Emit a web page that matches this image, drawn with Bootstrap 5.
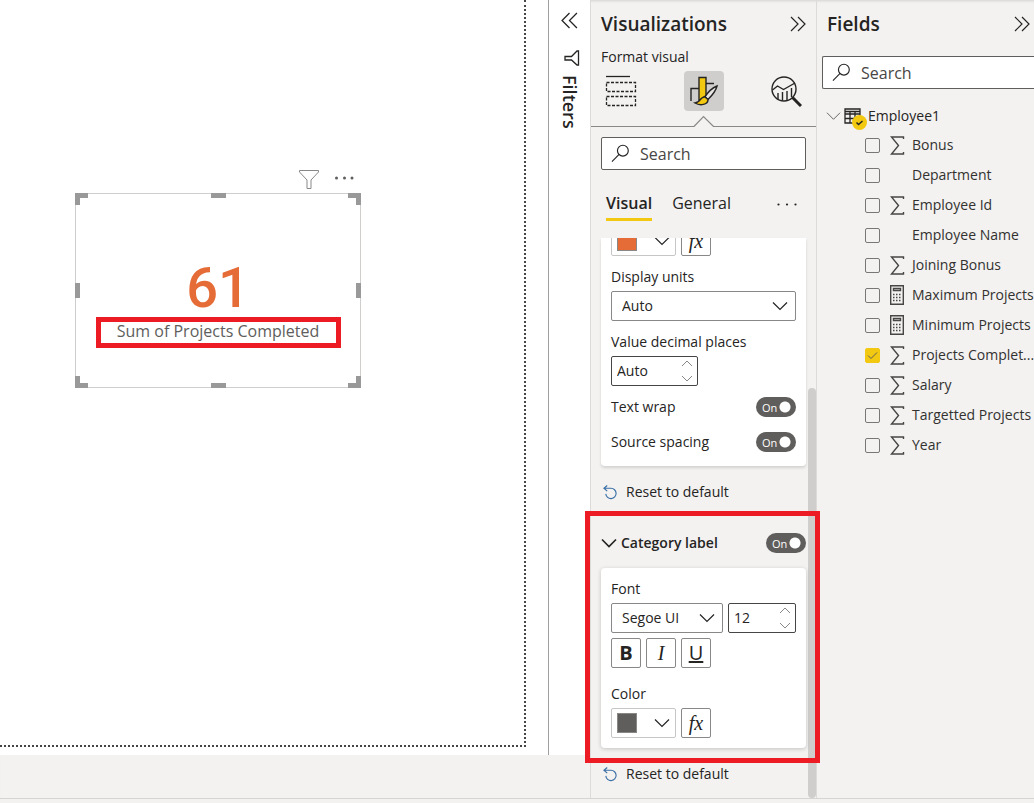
<!DOCTYPE html>
<html lang="en">
<head>
<meta charset="utf-8">
<meta name="viewport" content="width=device-width, initial-scale=1">
<title>Report editor</title>
<link rel="stylesheet" href="https://cdn.jsdelivr.net/npm/bootstrap@5.3.0/dist/css/bootstrap.min.css">
<style>
:root{--ink:#252423;--pane:#f3f2f1;--line:#8a8886;--yellow:#f2c811;--red:#ed1c24}
body{font-family:"Open Sans","Noto Sans",sans-serif;font-size:14px;line-height:20px;color:var(--ink);background:var(--pane)}
button{color:inherit}
svg{display:block;flex:none}
.line-icon{fill:none;stroke:var(--ink)}
.btn{font-size:14px;line-height:20px;color:var(--ink)}
.shell{min-height:100vh;overflow:hidden;display:grid;grid-template-rows:1fr 5px}
.workspace{display:grid;grid-template-columns:minmax(0,1fr) 226px 218px;box-shadow:inset 0 3px 3px -2px #0002}
.status-line{border-top:1px solid #d6d4d2}
.bottom-strip{height:43px}
.report{background:#fff}
.sheet{border-right:2px dotted #484644;border-bottom:2px dotted #484644;margin:0 22px 8px 0}
.filters{width:42px;border-left:1px solid #a19f9d}
.filters-name{writing-mode:vertical-rl;font-size:18px;font-weight:600;padding-top:9px}
.filter-cone{margin-top:21px}
/* card visual on the report canvas */
.card-visual{left:75px;top:193px;width:286px;height:195px;border:1px solid #d0cecd}
.visual-tools{right:5px;top:-24px}
.figure-value{font-family:Roboto,sans-serif;font-size:56px;line-height:56px;font-weight:500;color:#e66c37;padding-top:66px}
.figure-label{width:245px;height:31px;margin:1px auto 0;border:5px solid var(--red);font-size:16px;line-height:18px;color:#605e5c}
.grip{position:absolute;background:#999}
.grip-h{width:15px;height:5px;left:50%;margin-left:-7px}
.grip-v{width:5px;height:15px;top:50%;margin-top:-8px}
.grip-c{width:13px;height:12px;border:0 solid #999;background:none}
/* panes */
.viz,.fields{border-left:1px solid #dddbd9}
.pane-head{padding:12px 10px 0}
.pane-title{font-size:19px;line-height:24px;font-weight:600}
.viz-body{padding:10px 10px 0}
.subtitle{padding:11px 10px 4px}
.modes{padding:0 10px}
.mode{width:40px;height:40px}
.mode-on{background:#d0cecd}
.search{height:33px;border:1px solid #605e5c;border-radius:2px;background:#fff;padding-left:9px}
.search-fields{margin:20px 0 0 5px}
.search input{border:0;outline:0;background:none;font-size:16px;width:100%;min-width:0}
.search input::placeholder{color:#484644;opacity:1}
.tabs{margin-top:21px;padding:0 9px 0 5px}
.btn.tab-btn{font-size:16px;line-height:24px;padding:0 0 3px;border:0;border-bottom:3px solid transparent;border-radius:0}
.btn.tab-on{font-weight:600;border-color:var(--yellow)}
.stack{margin-top:17px}
.settings{background:#fff;border-radius:4px;box-shadow:0 1px 4px #0003;padding:0 10px}
.settings-cut{border-radius:0 0 4px 4px;box-shadow:0 2px 3px #0002}
.cut-row{height:18px;overflow:hidden}
.row-a,.row-b,.cut-row{gap:5px}
.box,.form-select.box{height:30px;border:1px solid var(--line);border-radius:2px;background-color:#fff;font-size:14px;line-height:20px;color:var(--ink)}
.form-select.box{padding:4px 30px 4px 10px;background-position:right 7px center;background-size:16px 10px;background-image:url("data:image/svg+xml,%3Csvg xmlns='http://www.w3.org/2000/svg' viewBox='0 0 16 10'%3E%3Cpath d='M1 1.5l7 7 7-7' fill='none' stroke='%23252423' stroke-width='1.2'/%3E%3C/svg%3E")}
.font-list{width:112px}
.spin{border-color:#484644;padding-right:4px}
.spin input{border:0;outline:0;width:50px;min-width:0;padding:0 0 0 5px;font-size:14px;color:var(--ink);background:none}
.spin-wide{width:87px}
.spin-narrow{width:68px}
.square{width:30px;padding:0}
.picker{width:65px;border-color:#c8c6c4;padding:0 5px}
.swatch{width:20px;height:20px;border:1px solid #8a8886}
.swatch-value{background:#e66c37}
.swatch-label{background:#605e5c}
.box.fx{font-family:"Liberation Serif",serif;font-style:italic;font-size:20px}
.box.glyph{font-size:20px}
.toggle{width:40px;height:20px;position:relative}
.toggle input{appearance:none;width:40px;height:20px;border-radius:10px;display:block;margin:0;background:radial-gradient(circle at 29px 10px,#fff 5px,transparent 6px) #605e5c}
.toggle span{position:absolute;left:6px;top:0;font-size:11px;line-height:21px;color:#fff}
.lab{padding:11px 0 4px}
.pair{padding-top:11px}
.pair + .pair{padding-top:15px}
.pair-last{padding-bottom:14px}
.reset{margin:16px 0 0 2px;gap:8px}
.reset-b{margin-top:1px}
.category{margin:9px -10px 0;padding:22px 10px 15px}
.callout{position:absolute;inset:0 -4px 0 -6px;border:5px solid var(--red);pointer-events:none;z-index:2}
.cat-head{gap:4px}
.cat-card{margin-top:15px;padding:11px 10px 10px}
.row-a{margin-top:4px}
.row-b{margin-top:5px}
.color-name{margin-top:16px}
.thumb{position:absolute;right:0;top:388px;bottom:0;width:8px;border-radius:4px;background:#d0cecd}
.table-row{padding:17px 0 4px 9px}
.table-icon{margin:0 7px 0 3px}
.field{height:30px;gap:9px;white-space:nowrap;padding-left:48px}
.field input{appearance:none;width:15px;height:15px;flex:none;margin:0;border:1px solid #797775;border-radius:2px}
.field input:checked{border-color:var(--yellow);background:var(--yellow) url("data:image/svg+xml,%3Csvg xmlns='http://www.w3.org/2000/svg' viewBox='0 0 13 13'%3E%3Cpath d='M2 6.5l3 3 6-6' fill='none' stroke='%23605e5c'/%3E%3C/svg%3E")}
.field label{display:flex;align-items:center;gap:7px;color:#323130;min-width:0}
.field .line-icon{stroke:#484644;stroke-width:1.4}
.badge-tick{left:8px;top:7px}
</style>
<script src="https://cdn.jsdelivr.net/npm/bootstrap@5.3.0/dist/js/bootstrap.bundle.min.js"></script>
</head>
<body>
<svg width="0" height="0" class="position-absolute" aria-hidden="true">
<symbol id="lens" viewBox="0 0 20 20"><circle cx="12.5" cy="7" r="5.7"/><path d="M8.5 11L1 18.5"/></symbol>
<symbol id="dbl" viewBox="0 0 16 16"><path d="M1 1l7 7-7 7M8 1l7 7-7 7"/></symbol>
<symbol id="dbl-left" viewBox="0 0 16 16"><path d="M8 1L1 8l7 7M15 1L8 8l7 7"/></symbol>
<symbol id="down" viewBox="0 0 16 10"><path d="M1 1.5l7 7 7-7"/></symbol>
<symbol id="spin" viewBox="0 0 12 22"><path d="M1 6l5-5 5 5M1 16l5 5 5-5"/></symbol>
<symbol id="undo" viewBox="0 0 16 16"><path d="M4.500 .5L1 3.500l3.500 3M1 3.500h7.500a5.500 5.500 0 1 1-5.500 6"/></symbol>
<symbol id="sigma" viewBox="0 0 14 19"><path d="M13.500 3V1H1.500l7 8.500-7 8.500h12v-2"/></symbol>
<symbol id="calc" viewBox="0 0 14 20"><path d="M.7.7h12.600v18.600H.7z"/><path d="M3.500 3.500h7v2h-7z"/><path d="M3 9.500h9M3 12.500h9M3 15.500h9" stroke-width="1.500" stroke-dasharray="1.500 1.500"/></symbol>
</svg>
<div class="shell">
<div class="workspace">
  <main class="d-flex flex-column">
    <div class="report d-flex flex-grow-1">
      <div class="sheet flex-grow-1 position-relative">
        <section class="card-visual position-absolute text-center" aria-label="Sum of Projects Completed">
          <div class="visual-tools position-absolute d-flex align-items-start gap-3">
            <svg width="20" height="19" viewBox="0 0 20 19" fill="none" stroke="#888"><path d="M.5.5h19v1.500L12 10v8.500H8V10L.5 2z"/></svg>
            <svg width="20" height="16" viewBox="0 0 20 16" fill="#605e5c"><circle cx="1.500" cy="8" r="1.500"/><circle cx="9.500" cy="8" r="1.500"/><circle cx="17" cy="8" r="1.500"/></svg>
          </div>
          <div class="figure-value">61</div>
          <div class="figure-label">Sum of Projects Completed</div>
          <i class="grip grip-h" style="top:-1px"></i><i class="grip grip-h" style="bottom:-1px"></i>
          <i class="grip grip-v" style="left:-1px"></i><i class="grip grip-v" style="right:-1px"></i>
          <i class="grip grip-c" style="left:-1px;top:-1px;border-width:5px 0 0 5px"></i>
          <i class="grip grip-c" style="right:-1px;top:-1px;border-width:5px 5px 0 0"></i>
          <i class="grip grip-c" style="left:-1px;bottom:-1px;border-width:0 0 5px 5px"></i>
          <i class="grip grip-c" style="right:-1px;bottom:-1px;border-width:0 5px 5px 0"></i>
        </section>
      </div>
      <aside class="filters d-flex flex-column align-items-center pt-2" aria-label="Filters">
        <button class="btn p-0 border-0 mt-1" aria-label="Expand filters"><svg class="line-icon" width="17" height="17" stroke-width="1.2"><use href="#dbl-left"/></svg></button>
        <svg class="line-icon filter-cone ms-1" width="16" height="16" viewBox="0 0 16 16" stroke-width="1.3"><path d="M14.500 1v14h-1.500L7.500 10H1V6.500h6.500L13 1z"/></svg>
        <div class="filters-name">Filters</div>
      </aside>
    </div>
    <div class="bottom-strip"></div>
  </main>

  <aside class="viz position-relative" aria-label="Visualizations">
    <div class="thumb"></div>
    <header class="pane-head d-flex align-items-center justify-content-between">
      <h2 class="pane-title m-0">Visualizations</h2>
      <button class="btn p-0 border-0" aria-label="Collapse"><svg class="line-icon" width="16" height="16" stroke-width="1.2"><use href="#dbl"/></svg></button>
    </header>
    <div class="subtitle">Format visual</div>
    <div class="modes d-flex justify-content-between">
      <button class="btn mode p-0 border-0 d-flex align-items-center justify-content-center" aria-label="Build"><svg class="line-icon" width="32" height="32" viewBox="0 0 32 32"><path d="M1 1.500h24" stroke-width="1.300"/><path d="M1.500 7.500h29v9h-29zM1.500 21.500h29v9h-29z" stroke-width="1.300" stroke-dasharray="3 1.500"/></svg></button>
      <button class="btn mode mode-on p-0 border-0 rounded-1 d-flex align-items-center justify-content-center" aria-label="Format"><svg width="28" height="30" viewBox="0 0 28 30" fill="none" stroke="#252423" stroke-width="1.400"><path d="M1 25V12.500h8M16 7.500h8"/><path d="M9 1.500h7v18l-7 5z" fill="#f2c811"/><path d="M27 10c-5 2-9 6-12 11l3 2.500c4-4 8-9 9-13.500z" fill="#e8e6e4"/><path d="M15 21c-5-1-3 5-10 6 5 3 13 2 13-3.500z" fill="#f2c811"/></svg></button>
      <button class="btn mode p-0 border-0 d-flex align-items-center justify-content-center" aria-label="Analytics"><svg class="line-icon" width="31" height="31" viewBox="0 0 31 31" stroke-width="1.400"><circle cx="13" cy="13" r="12"/><path d="M1.500 14l5-4 6 3.500L24 7M7 23v-6M11.500 24v-8M16 24v-9M20.500 21v-9"/><path d="M21.500 21.500l8.500 8.500" stroke-width="3"/></svg></button>
    </div>
    <svg class="w-100 mt-1" height="12" aria-hidden="true"><svg x="50%" width="1" height="12" overflow="visible"><path d="M-400 11.500H-9.500L0 1.500 10 11.500H400" fill="none" stroke="#8a8886" stroke-width="1.200"/></svg></svg>
    <div class="viz-body">
      <label class="search d-flex align-items-center gap-2"><svg class="line-icon" width="19" height="19" stroke-width="1.200"><use href="#lens"/></svg><input type="search" placeholder="Search" aria-label="Search settings"></label>
      <nav class="tabs d-flex align-items-start gap-3">
        <button class="btn tab-btn tab-on">Visual</button>
        <button class="btn tab-btn ms-1">General</button>
        <button class="btn p-0 border-0 ms-auto mt-2 pt-1" aria-label="More"><svg width="20" height="4" viewBox="0 0 20 4" fill="#252423"><circle cx="1.500" cy="1.500" r="1.100"/><circle cx="10" cy="1.500" r="1.100"/><circle cx="18.500" cy="1.500" r="1.100"/></svg></button>
      </nav>
      <div class="stack">
      <div class="settings settings-cut">
        <div class="cut-row d-flex align-items-end">
          <button class="box picker d-flex align-items-center justify-content-between flex-shrink-0" aria-label="Value color"><span class="swatch swatch-value"></span><svg class="line-icon" width="16" height="10" stroke-width="1.200"><use href="#down"/></svg></button>
          <button class="box square fx flex-shrink-0">fx</button>
        </div>
        <label for="units" class="d-block lab">Display units</label>
        <select id="units" class="form-select box"><option>Auto</option></select>
        <label for="places" class="d-block lab">Value decimal places</label>
        <div class="box spin spin-wide d-flex align-items-center justify-content-between"><input id="places" type="text" value="Auto"><svg width="12" height="22" fill="none" stroke="#8a8886"><use href="#spin"/></svg></div>
        <div class="d-flex justify-content-between pair"><label for="wrap">Text wrap</label><span class="toggle"><input id="wrap" type="checkbox" role="switch" checked><span>On</span></span></div>
        <div class="d-flex justify-content-between pair pair-last"><label for="spacing">Source spacing</label><span class="toggle"><input id="spacing" type="checkbox" role="switch" checked><span>On</span></span></div>
      </div>
      <button class="btn reset p-0 border-0 d-flex align-items-center"><svg width="15" height="15" fill="none" stroke="#3a6ea5" stroke-width="1.200"><use href="#undo"/></svg>Reset to default</button>
      <section class="category position-relative">
        <div class="callout"></div>
        <div class="d-flex align-items-center cat-head">
          <svg class="line-icon" width="16" height="10" stroke-width="1.700"><use href="#down"/></svg>
          <label for="cat" class="fw-semibold flex-grow-1">Category label</label>
          <span class="toggle"><input id="cat" type="checkbox" role="switch" checked><span>On</span></span>
        </div>
        <div class="settings cat-card">
          <label for="font" class="d-block">Font</label>
          <div class="d-flex row-a">
            <select id="font" class="form-select box font-list"><option>Segoe UI</option></select>
            <div class="box spin spin-narrow d-flex align-items-center justify-content-between"><input type="text" value="12" aria-label="Font size"><svg width="12" height="22" fill="none" stroke="#8a8886"><use href="#spin"/></svg></div>
          </div>
          <div class="d-flex row-b">
            <button class="box square glyph fw-bold">B</button>
            <button class="box square fx">I</button>
            <button class="box square glyph text-decoration-underline">U</button>
          </div>
          <div class="color-name">Color</div>
          <div class="d-flex row-a">
            <button class="box picker d-flex align-items-center justify-content-between" aria-label="Label color"><span class="swatch swatch-label"></span><svg class="line-icon" width="16" height="10" stroke-width="1.200"><use href="#down"/></svg></button>
            <button class="box square fx">fx</button>
          </div>
        </div>
      </section>
      <button class="btn reset reset-b p-0 border-0 d-flex align-items-center"><svg width="15" height="15" fill="none" stroke="#3a6ea5" stroke-width="1.200"><use href="#undo"/></svg>Reset to default</button>
      </div>
    </div>
  </aside>

  <aside class="fields overflow-hidden" aria-label="Fields">
    <header class="pane-head d-flex align-items-center justify-content-between pe-0">
      <h2 class="pane-title m-0">Fields</h2>
      <button class="btn p-0 border-0 me-0 pe-1" aria-label="Collapse"><svg class="line-icon" width="16" height="16" stroke-width="1.200"><use href="#dbl"/></svg></button>
    </header>
    <label class="search search-fields d-flex align-items-center gap-2 border-end-0 rounded-end-0"><svg class="line-icon" width="19" height="19" stroke-width="1.200"><use href="#lens"/></svg><input type="search" placeholder="Search" aria-label="Search fields"></label>
    <div class="table-row d-flex align-items-center">
      <svg fill="none" stroke="#605e5c" width="15" height="10"><use href="#down"/></svg>
      <span class="table-icon position-relative"><svg class="line-icon" width="17" height="16" viewBox="0 0 17 16" stroke-width="1.300"><path d="M1 1h15v14H1zM1 6h15M1 10.500h15M6 3.500V15M11 3.500V15M1 3.500h15"/></svg><svg class="badge-tick position-absolute" width="15" height="15" viewBox="0 0 15 15"><circle cx="7.500" cy="7.500" r="7.500" fill="#f2c811"/><path d="M4.500 7.500l2 2 4-3.500" fill="none" stroke="#252423" stroke-width="1.500"/></svg></span>
      <span>Employee1</span>
    </div>
    <div class="field d-flex align-items-center"><input type="checkbox" id="f1"><label for="f1"><svg class="line-icon" width="16" height="19"><use href="#sigma"/></svg>Bonus</label></div>
    <div class="field d-flex align-items-center"><input type="checkbox" id="f2"><label for="f2"><svg width="16" height="19"></svg>Department</label></div>
    <div class="field d-flex align-items-center"><input type="checkbox" id="f3"><label for="f3"><svg class="line-icon" width="16" height="19"><use href="#sigma"/></svg>Employee Id</label></div>
    <div class="field d-flex align-items-center"><input type="checkbox" id="f4"><label for="f4"><svg width="16" height="19"></svg>Employee Name</label></div>
    <div class="field d-flex align-items-center"><input type="checkbox" id="f5"><label for="f5"><svg class="line-icon" width="16" height="19"><use href="#sigma"/></svg>Joining Bonus</label></div>
    <div class="field d-flex align-items-center"><input type="checkbox" id="f6"><label for="f6"><svg class="line-icon" width="16" height="20"><use href="#calc"/></svg>Maximum Projects</label></div>
    <div class="field d-flex align-items-center"><input type="checkbox" id="f7"><label for="f7"><svg class="line-icon" width="16" height="20"><use href="#calc"/></svg>Minimum Projects</label></div>
    <div class="field d-flex align-items-center"><input type="checkbox" id="f8" checked><label for="f8"><svg class="line-icon" width="16" height="19"><use href="#sigma"/></svg>Projects Complet...</label></div>
    <div class="field d-flex align-items-center"><input type="checkbox" id="f9"><label for="f9"><svg class="line-icon" width="16" height="19"><use href="#sigma"/></svg>Salary</label></div>
    <div class="field d-flex align-items-center"><input type="checkbox" id="f10"><label for="f10"><svg class="line-icon" width="16" height="19"><use href="#sigma"/></svg>Targetted Projects</label></div>
    <div class="field d-flex align-items-center"><input type="checkbox" id="f11"><label for="f11"><svg class="line-icon" width="16" height="19"><use href="#sigma"/></svg>Year</label></div>
  </aside>
</div>
<div class="status-line"></div>
</div>
</body>
</html>
